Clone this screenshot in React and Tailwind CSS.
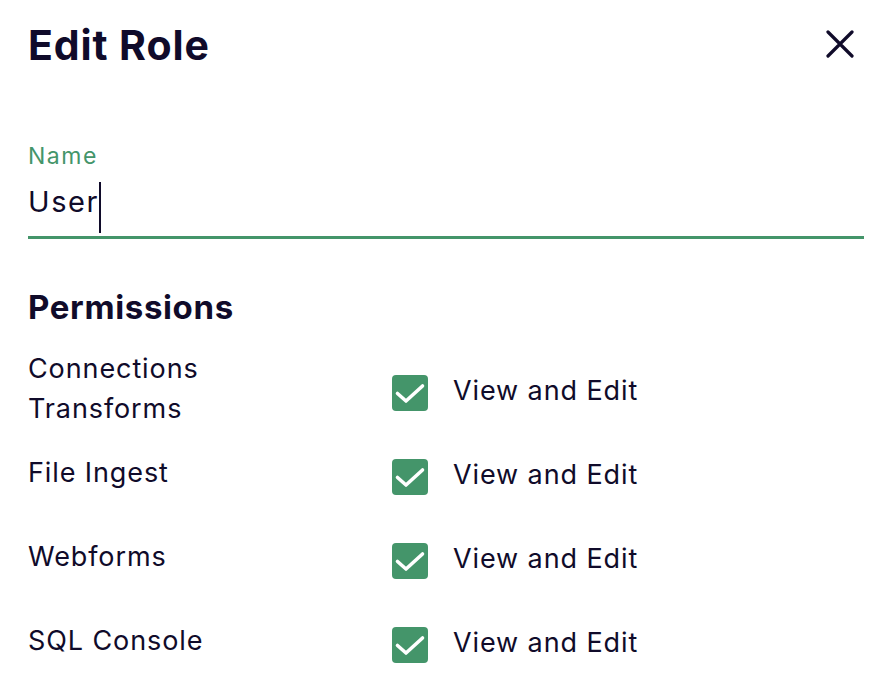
import React from 'react';

const permissions = [
  { labels: ['Connections', 'Transforms'], tall: true },
  { labels: ['File Ingest'] },
  { labels: ['Webforms'] },
  { labels: ['SQL Console'] },
];

const CheckBox = ({ className }) => (
  <div className={`w-[36px] h-[36px] rounded-[4px] bg-[#44956a] shrink-0 ${className}`}>
    <svg width="36" height="36" viewBox="0 0 36 36" fill="none">
      <path d="M5.5 18.5L14 26L30.5 11" stroke="white" strokeWidth="3.6" strokeLinecap="round" strokeLinejoin="round" />
    </svg>
  </div>
);

const App = () => {
  return (
    <div className="w-[896px] h-[684px] bg-white pl-[28px] pr-[32px] font-['Inter',sans-serif] text-[#100b2a] overflow-hidden">
      <div className="flex justify-between items-start pt-[21px]">
        <h1 className="text-[41px] leading-[48px] font-bold tracking-[0.9px]">Edit Role</h1>
        <button className="mt-[9px] mr-[10px]">
          <svg width="28" height="28" viewBox="0 0 28 28" fill="none">
            <path d="M2 2L26 26M26 2L2 26" stroke="#100b2a" strokeWidth="3.2" strokeLinecap="round" />
          </svg>
        </button>
      </div>

      <div className="mt-[73px]">
        <label className="block text-[23px] leading-[28px] text-[#44956a] tracking-[1.5px]">Name</label>
        <div className="flex items-start h-[58px] mt-[8px]">
          <span className="text-[29px] leading-[40px] mt-[4px] tracking-[1.6px]">User</span>
          <span className="w-[2px] h-[51px] bg-[#100b2a] mt-[4px]"></span>
        </div>
        <div className="h-[3px] bg-[#44956a]"></div>
      </div>

      <h2 className="mt-[48px] text-[33px] leading-[40px] font-bold tracking-[0.65px]">Permissions</h2>

      <div className="flex flex-col mt-[22px]">
        {permissions.map((p, i) => (
          <div key={i} className={`flex items-start ${p.tall ? 'h-[104px]' : 'h-[84px]'}`}>
            <div className="w-[364px] text-[27px] leading-[40px] tracking-[0.9px]">
              {p.labels.map((l) => (
                <div key={l}>{l}</div>
              ))}
            </div>
            <CheckBox className={p.tall ? 'mt-[26px]' : 'mt-[6px]'} />
            <span className={`ml-[25px] text-[27px] leading-[40px] tracking-[0.9px] ${p.tall ? 'mt-[22px]' : 'mt-[2px]'}`}>
              View and Edit
            </span>
          </div>
        ))}
      </div>
    </div>
  );
};

export default App;
